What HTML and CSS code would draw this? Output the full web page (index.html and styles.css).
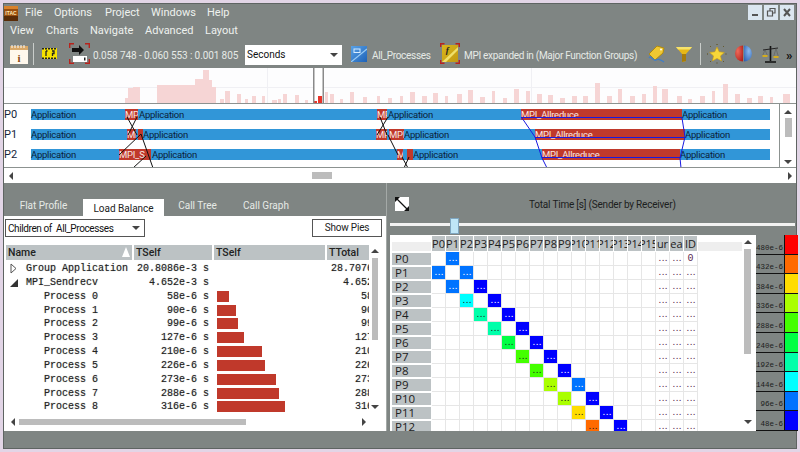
FILE: index.html
```html
<!DOCTYPE html>
<html lang="en">
<head>
    <meta charset="UTF-8">
    <meta name="viewport" content="width=device-width, initial-scale=1.0">
    <title>Intel Trace Analyzer</title>
    <link rel="stylesheet" href="styles.css">
</head>
<body>
    <div class="window">
        <!-- Menus -->
        <div class="menubar menubar-top">
            <svg class="logo" width="14" height="15" viewBox="0 0 14 15">
                <rect width="14" height="15" fill="#9a4f10"/>
                <rect y="10" width="14" height="5" fill="#5a2c08"/>
                <rect width="14" height="3" fill="#d9822b"/>
                <text x="7" y="9" class="logo-text" text-anchor="middle">ITAC</text>
            </svg>
            <span class="menu-file">File</span>
            <span class="menu-options">Options</span>
            <span class="menu-project">Project</span>
            <span class="menu-windows">Windows</span>
            <span class="menu-help">Help</span>
            <div class="win-buttons">
                <div class="win-btn"><svg width="14" height="15" viewBox="0 0 14 15"><rect x="4" y="9" width="6" height="2" fill="#555"/></svg></div>
                <div class="win-btn"><svg width="14" height="15" viewBox="0 0 14 15"><path d="M6 5.5V3.5H11V8H9M3.5 6H8.5V11H3.5Z" fill="none" stroke="#555" stroke-width="1.2"/></svg></div>
                <div class="win-btn"><svg width="14" height="15" viewBox="0 0 14 15"><path d="M4 4L10 11M10 4L4 11" stroke="#555" stroke-width="2"/></svg></div>
            </div>
        </div>
        <div class="menubar menubar-second">
            <span class="menu-view">View</span>
            <span class="menu-charts">Charts</span>
            <span class="menu-navigate">Navigate</span>
            <span class="menu-advanced">Advanced</span>
            <span class="menu-layout">Layout</span>
        </div>

        <!-- Toolbar -->
        <div class="toolbar">
            <svg class="tool-info" width="18" height="20" viewBox="0 0 18 20">
                <rect y="2" width="18" height="18" fill="#fff8ec"/>
                <rect y="2" width="18" height="4" fill="#d8a868"/>
                <path d="M2 1v3M5 1v3M8 1v3M11 1v3M14 1v3" stroke="#fff" stroke-width="1"/>
                <text x="9" y="18" class="icon-i" text-anchor="middle">i</text>
            </svg>
            <div class="tool-sep tool-sep-a"></div>
            <svg class="tool-film" width="15" height="11" viewBox="0 0 15 11">
                <rect width="15" height="11" fill="#f6e200"/>
                <path d="M0 .7H15M0 10.3H15" stroke="#222" stroke-width="1.4" stroke-dasharray="2 1"/>
                <path d="M4 3V8M5.5 3H4M10 3H12V5.5H10.5V8" stroke="#222" fill="none" stroke-width="1.3"/>
            </svg>
            <svg class="tool-select" width="21" height="21" viewBox="0 0 21 21">
                <path d="M.7 5V.7H5M16 .7H20.3V5M.7 16V20.3H5M16 20.3H20.3V16" fill="none" stroke="#b8231c" stroke-width="1.4"/>
                <rect x="4" y="13" width="14" height="6" fill="#fff"/>
                <rect x="15" y="14.5" width="1.5" height="3" fill="#222"/>
                <path d="M3 5H10V2L15 7L10 12V9H3Z" fill="#111"/>
            </svg>
            <span class="tool-time">0.058 748 - 0.060 553 : 0.001 805</span>
            <div class="combo combo-units"><span>Seconds</span><i class="arr-down"></i></div>
            <svg class="tool-blue" width="16" height="16" viewBox="0 0 16 16">
                <defs><linearGradient id="blueFill" x1="0" y1="0" x2="1" y2="1"><stop offset="0" stop-color="#5aa2e6"/><stop offset="1" stop-color="#1d62b8"/></linearGradient></defs>
                <rect width="16" height="16" fill="url(#blueFill)"/>
                <rect x="3" y="3" width="6" height="3.5" fill="none" stroke="#d7ecff"/>
                <path d="M0 16L16 3" stroke="#9accf5" stroke-width="1.2"/>
            </svg>
            <span class="tool-group">All_Processes</span>
            <svg class="tool-yellow" width="20" height="21" viewBox="0 0 20 21">
                <defs><linearGradient id="yellowFill" x1="0" y1="0" x2="1" y2="1"><stop offset="0" stop-color="#d8b61c"/><stop offset="1" stop-color="#c29a12"/></linearGradient></defs>
                <path d="M.7 4V.7H4.5M15.5 .7H19.3V4M.7 17V20.3H4.5M15.5 20.3H19.3V17" fill="none" stroke="#b8231c" stroke-width="1.4"/>
                <rect x="2" y="2" width="16" height="17" fill="url(#yellowFill)"/>
                <path d="M2 19L18 4V7L6 19Z" fill="#efe06a"/>
                <text x="7" y="10" class="icon-f" text-anchor="middle">f</text>
            </svg>
            <span class="tool-expanded">MPI expanded in (Major Function Groups)</span>
            <svg class="tool-tag" width="17" height="18" viewBox="0 0 17 18">
                <path d="M1 9L9 1L16 3L15 8L7 15Z" fill="#f0c832" stroke="#b08a10"/>
                <circle cx="13" cy="4.5" r="1" fill="#fff"/>
                <path d="M1 13C3 9 5 17 8 15S13 15 16 17" fill="none" stroke="#3f7ec8" stroke-width="1.3"/>
            </svg>
            <svg class="tool-funnel" width="16" height="16" viewBox="0 0 16 16">
                <path d="M0 1H16L10 8V15L6 16V8Z" fill="#e6b818"/>
                <path d="M0 1H16L14 3.5H2Z" fill="#f6e26a"/>
                <path d="M6 8H10V15L6 16Z" fill="#a67c0c"/>
            </svg>
            <div class="tool-sep tool-sep-b"></div>
            <svg class="tool-star" width="20" height="20" viewBox="0 0 20 20">
                <path d="M10 3L12.2 7.8L17.4 8.4L13.5 11.9L14.6 17L10 14.4L5.4 17L6.5 11.9L2.6 8.4L7.8 7.8Z" fill="#f7d63a" stroke="#c79a10" stroke-width=".6"/>
                <path d="M10 0V1.5M3 2L4 3M17 2L16 3M0 10H1.5M18.5 10H20M3 18L4 17M17 18L16 17M10 18.5V20" stroke="#5b4a10" stroke-width="1" stroke-dasharray="1 .6"/>
            </svg>
            <svg class="tool-globe" width="17" height="17" viewBox="0 0 17 17">
                <defs>
                    <radialGradient id="redBall" cx=".35" cy=".35" r=".8"><stop offset="0" stop-color="#f06a5a"/><stop offset="1" stop-color="#b0201a"/></radialGradient>
                    <radialGradient id="blueBall" cx=".6" cy=".35" r=".8"><stop offset="0" stop-color="#8ab8ee"/><stop offset="1" stop-color="#2e62b0"/></radialGradient>
                </defs>
                <path d="M8 0.5A8 8 0 0 0 8 16.500Z" fill="url(#redBall)"/>
                <path d="M9 0.5A8 8 0 0 1 9 16.500Z" fill="url(#blueBall)"/>
            </svg>
            <svg class="tool-scale" width="17" height="18" viewBox="0 0 17 18">
                <path d="M8.500 1V16M3 17H14" stroke="#111" stroke-width="1.600"/>
                <path d="M1 5L16 3" stroke="#222" stroke-width="1"/>
                <path d="M3 5L.8 10M3 5L5.200 10M14 3.500L11.800 11M14 3.500L16.200 11" stroke="#555" stroke-width=".5"/>
                <rect x=".5" y="10" width="5" height="2" fill="#d4ac1e"/>
                <rect x="11.500" y="11" width="5" height="2" fill="#d4ac1e"/>
            </svg>
            <span class="tool-more">»</span>
        </div>

        <!-- Event timeline -->
        <div class="timeline">
            <svg id="histogram" class="histogram" width="792" height="35" viewBox="4 68 792 35"></svg>
            <div class="trace">
                <div class="trace-canvas" id="trace-canvas">
                    <svg class="trace-lines" width="776" height="64" viewBox="4 104 776 64">
                        <g stroke="#111" stroke-width="1" fill="none">
                            <path d="M127 117L137 135M137 117L128 135"/>
                            <path d="M141 134L119 155M133 168L146 156M141 134L153 168"/>
                            <path d="M380 117L387 135M388 117L377 135M388 135L398 155"/>
                            <path d="M402 157L408 168M409 157L404 168"/>
                        </g>
                        <g stroke="#1a1ae0" stroke-width="1" fill="none">
                            <path d="M521 117.500H682M535 137.500H685M542 157.500H680"/>
                            <path d="M522 118L535 137L542 158L547 168"/>
                            <path d="M682 118L685 137L680 158L681 168"/>
                        </g>
                    </svg>
                </div>
                <div class="vscroll trace-vscroll">
                    <i class="arr-up"></i>
                    <div class="thumb trace-thumb"></div>
                    <i class="arr-down"></i>
                </div>
            </div>
            <div class="hscroll timeline-hscroll">
                <i class="arr-left"></i>
                <div class="thumb timeline-thumb"></div>
                <i class="arr-right"></i>
            </div>
        </div>

        <div class="panels">
            <!-- Function profile -->
            <div class="left">
                <div class="tabs">
                    <div class="tab tab-flat">Flat Profile</div>
                    <div class="tab tab-load active">Load Balance</div>
                    <div class="tab tab-tree">Call Tree</div>
                    <div class="tab tab-graph">Call Graph</div>
                </div>
                <div class="left-body">
                    <div class="controls">
                        <div class="combo combo-children"><span>Children of  All_Processes</span><i class="arr-down"></i></div>
                        <div class="button">Show Pies</div>
                    </div>
                    <div class="table-wrap">
                        <div class="table">
                            <div class="table-head">
                                <div class="head-name">Name<i class="sort-arrow"></i></div>
                                <div>TSelf</div>
                                <div>TSelf</div>
                                <div>TTotal</div>
                            </div>
                            <div class="row">
                                <div class="name level-0"><svg class="tree-open" width="7" height="11" viewBox="0 0 7 11"><path d="M1 1L6 5.500L1 10Z" fill="#fff" stroke="#555"/></svg>Group Application</div>
                                <div class="num">20.8086e-3 s</div>
                                <div></div>
                                <div class="total"><span>28.7076e-3 s</span></div>
                            </div>
                            <div class="row">
                                <div class="name level-0"><i class="tree-closed"></i>MPI_Sendrecv</div>
                                <div class="num">4.652e-3 s</div>
                                <div></div>
                                <div class="total"><span>4.652e-3 s</span></div>
                            </div>
                            <div id="process-rows"></div>
                        </div>
                        <div class="vscroll table-vscroll">
                            <i class="arr-up"></i>
                            <div class="thumb table-thumb"></div>
                            <i class="arr-down"></i>
                        </div>
                    </div>
                    <div class="hscroll table-hscroll">
                        <i class="arr-left"></i>
                        <div class="thumb table-hthumb"></div>
                        <i class="arr-right"></i>
                    </div>
                </div>
            </div>

            <!-- Message profile -->
            <div class="right">
                <div class="matrix-title">
                    <svg class="expand-icon" width="14" height="14" viewBox="0 0 14 14">
                        <rect width="14" height="14" fill="#fff"/>
                        <path d="M1 1L13 13" stroke="#111" stroke-width="1.300"/>
                        <path d="M0 0H5L0 5ZM14 14H9L14 9Z" fill="#111"/>
                    </svg>
                    <span>Total Time [s] (Sender by Receiver)</span>
                </div>
                <div class="slider"><div class="slider-track"></div><div class="slider-handle"></div></div>
                <div class="matrix-row">
                    <div class="matrix">
                        <div class="matrix-grid" id="matrix-grid"></div>
                        <div class="vscroll matrix-vscroll">
                            <i class="arr-up"></i>
                            <div class="thumb matrix-thumb"></div>
                            <i class="arr-down"></i>
                        </div>
                    </div>
                    <div class="legend" id="legend"></div>
                </div>
            </div>
        </div>
    </div>
    <script src="app.js"></script>
</body>
</html>
```

FILE: styles.css
```css
/* General Reset */
body {
    font-family: Roboto, "Noto Sans", sans-serif;
    margin: 0;
    background-color: #e2d5e6;
    color: #222;
    overflow: hidden;
}

i {
    display: block;
}

.window {
    margin: 3px;
    width: 792px;
    height: 444px;
    border: 1px solid #5e6462;
    background: #7f8583;
    display: flex;
    flex-direction: column;
}

/* Menus */
.menubar {
    display: flex;
    align-items: center;
    color: #eef1ee;
    font-size: 11px;
    flex: none;
}

.menubar-top {
    height: 17px;
}

.menubar-second {
    height: 18px;
}

.logo {
    flex: none;
    margin-top: 1px;
}

.logo-text {
    font: bold 5px "Liberation Sans", sans-serif;
    fill: #ffe9b8;
}

.icon-i {
    font: bold 11px "Liberation Serif", serif;
    fill: #8a4a14;
}

.icon-f {
    font: italic bold 9px "Liberation Serif", serif;
    fill: #222;
}

.menu-file { margin-left: 7px; width: 29px; }
.menu-options { width: 51px; }
.menu-project { width: 46px; }
.menu-windows { width: 56px; }

.menu-view { margin-left: 6px; width: 36px; }
.menu-charts { width: 44px; }
.menu-navigate { width: 55px; }
.menu-advanced { width: 60px; }

.win-buttons {
    margin-left: auto;
    margin-right: 2px;
    display: flex;
    gap: 2px;
}

.win-btn {
    width: 14px;
    height: 15px;
    background: #dbe6f0;
}

/* Toolbar */
.toolbar {
    height: 29px;
    flex: none;
    display: flex;
    align-items: center;
    padding-left: 6px;
    color: #e6eae6;
    font-size: 10px;
    letter-spacing: -0.3px;
    white-space: nowrap;
}

.toolbar svg {
    flex: none;
}

.toolbar span {
    margin-top: 3px;
}

.tool-sep {
    width: 1px;
    height: 22px;
    background: #c9cdca;
}

.tool-sep-a { margin-left: 5px; }
.tool-film { margin-left: 8px; }
.tool-select { margin-left: 12px; }
.tool-time { margin-left: 3px; width: 145px; letter-spacing: -0.1px; }
.combo-units { margin: 2px 0 0 7px; width: 97px; }
.tool-blue { margin-left: 9px; }
.tool-group { margin-left: 5px; width: 57px; }
.tool-yellow { margin-left: 11px; }
.tool-expanded { margin-left: 4px; width: 173px; }
.tool-tag { margin-left: 11px; }
.tool-funnel { margin-left: 11px; }
.tool-sep-b { margin-left: 8px; }
.tool-star { margin-left: 6px; }
.tool-globe { margin-left: 8px; }
.tool-scale { margin-left: 10px; }
.tool-more { margin-left: 7px; color: #111; font-weight: bold; font-size: 13px; }

.toolbar .combo span {
    margin-top: 0;
}

.combo {
    height: 20px;
    background: #fff;
    color: #111;
    display: flex;
    align-items: center;
    justify-content: space-between;
    padding: 0 4px 0 2px;
    box-sizing: border-box;
    font-size: 10px;
    letter-spacing: 0;
    white-space: pre;
}

/* Scroll arrows */
.arr-up, .arr-down {
    width: 0;
    height: 0;
    border-left: 4px solid transparent;
    border-right: 4px solid transparent;
}

.arr-up { border-bottom: 4px solid #444; }
.arr-down { border-top: 4px solid #444; }

.arr-left, .arr-right {
    width: 0;
    height: 0;
    border-top: 4px solid transparent;
    border-bottom: 4px solid transparent;
}

.arr-left { border-right: 4px solid #444; }
.arr-right { border-left: 4px solid #444; }

.thumb {
    background: #bcbcbc;
}

.vscroll {
    display: flex;
    flex-direction: column;
    align-items: center;
    flex: none;
}

.hscroll {
    display: flex;
    align-items: center;
    flex: none;
}

/* Event timeline */
.timeline {
    flex: none;
    background: #fff;
}

.histogram {
    display: block;
    background: #fdfdfe;
    border-bottom: 1px solid #8c9290;
}

.trace {
    display: flex;
    height: 64px;
    border-bottom: 1px solid #8c9290;
    box-sizing: border-box;
}

.trace-canvas {
    position: relative;
    width: 776px;
    border-right: 1px solid #8c9290;
    overflow: hidden;
}

.trace-lines {
    position: absolute;
    left: 0;
    top: 0;
}

.trace-label {
    position: absolute;
    left: 0;
    font-size: 11px;
    line-height: 12px;
    color: #14263a;
}

.trace-bar {
    position: absolute;
    height: 11px;
    line-height: 12px;
    font-size: 9.500px;
    letter-spacing: -0.25px;
    white-space: nowrap;
    color: #0b2238;
    background: #3196d8;
}

.trace-bar.mpi {
    background: #c0392b;
    color: #f6e6e2;
    overflow: hidden;
}

.trace-bar.plain {
    background: none;
}

.trace-vscroll {
    width: 16px;
    padding-top: 6px;
    box-sizing: border-box;
}

.trace-thumb {
    width: 7px;
    height: 19px;
    margin: 4px 0 23px;
}

.timeline-hscroll {
    height: 15px;
    padding: 0 4px 0 5px;
}

.timeline-thumb {
    width: 20px;
    height: 7px;
    margin-left: 299px;
}

.timeline-hscroll .arr-right {
    margin-left: auto;
}

/* Bottom panels */
.panels {
    flex: 1;
    display: flex;
    min-height: 0;
    padding-bottom: 17px;
}

.left {
    width: 382px;
    display: flex;
    flex-direction: column;
    flex: none;
}

.tabs {
    height: 33px;
    display: flex;
    align-items: flex-end;
    flex: none;
    color: #e6eae6;
    font-size: 10px;
}

.tab {
    height: 17px;
    line-height: 14px;
    text-align: center;
}

.tab-flat { width: 79px; }
.tab-load { width: 81px; }
.tab-tree { width: 67px; }
.tab-graph { width: 70px; }

.tab.active {
    background: #fff;
    color: #222;
    line-height: 19px;
}

.left-body {
    flex: 1;
    background: #fff;
    min-height: 0;
    padding: 3px 4px 0 1px;
    display: flex;
    flex-direction: column;
}

.controls {
    display: flex;
    justify-content: space-between;
    height: 18px;
    flex: none;
}

.combo-children {
    width: 140px;
    height: 18px;
    border: 1px solid #555;
    letter-spacing: -0.4px;
}

.button {
    width: 70px;
    border: 1px solid #555;
    box-sizing: border-box;
    text-align: center;
    font-size: 10px;
    letter-spacing: -0.2px;
    line-height: 16px;
}

.table-wrap {
    display: flex;
    height: 170px;
    margin: 8px 0 0 1px;
    flex: none;
}

.table {
    width: 364px;
    flex: none;
    overflow: hidden;
}

.table-head, .row {
    display: grid;
    grid-template-columns: 126px 78px 111px 42px;
    column-gap: 2px;
}

.table-head {
    height: 15px;
    margin-bottom: 2px;
    font-size: 10.5px;
    line-height: 15px;
    font-weight: 500;
}

.table-head div {
    background: #bcc2c4;
    padding-left: 2px;
    position: relative;
}

.sort-arrow {
    position: absolute;
    right: 2px;
    top: 2px;
    width: 0;
    height: 0;
    border-left: 4px solid transparent;
    border-right: 4px solid transparent;
    border-bottom: 10px solid #fff;
}

.row {
    height: 13.85px;
    font: 10px/13.85px "Liberation Mono", monospace;
    color: #222;
    text-shadow: 0 0 1px #999;
    white-space: pre;
}

.name {
    position: relative;
}

.level-0 { padding-left: 20px; }
.level-1 { padding-left: 38px; }

.tree-open {
    position: absolute;
    left: 4px;
    top: 1px;
}

.tree-closed {
    position: absolute;
    left: 4px;
    top: 3px;
    width: 0;
    height: 0;
    border-left: 8px solid transparent;
    border-bottom: 8px solid #333;
}

.num {
    text-align: right;
    padding-right: 3px;
}

.bar {
    height: 11px;
    margin: 1px 0 0 3px;
    background: #c0392b;
}

.total {
    overflow: hidden;
    display: flex;
    justify-content: flex-end;
}

.total span {
    flex: none;
    margin-right: -34px;
}

.table-vscroll {
    width: 10px;
    padding-top: 4px;
    box-sizing: border-box;
}

.table-thumb {
    width: 6px;
    height: 82px;
    margin: 5px 0 65px;
}

.table-hscroll {
    height: 14px;
    padding-left: 6px;
}

.table-hthumb {
    width: 227px;
    height: 6px;
    margin-left: 4px;
    margin-right: 116px;
}

/* Matrix */
.right {
    flex: 1;
    min-width: 0;
    padding-left: 3px;
    display: flex;
    flex-direction: column;
    border-left: 1px solid #a4a9a7;
    box-sizing: border-box;
}

.matrix-title {
    height: 35px;
    flex: none;
    display: flex;
    align-items: center;
    padding-top: 7px;
    box-sizing: border-box;
    color: #1c2020;
    font-size: 10px;
    letter-spacing: -0.2px;
    white-space: nowrap;
}

.expand-icon {
    margin-left: 5px;
}

.matrix-title span {
    margin-left: 120px;
}

.slider {
    height: 17px;
    flex: none;
    position: relative;
}

.slider-track {
    height: 3px;
    margin: 5px 0 0 0;
    background: #f2f2f2;
    width: 405px;
}

.slider-handle {
    position: absolute;
    left: 60px;
    top: 0;
    width: 7px;
    height: 14px;
    background: #bfe6f7;
    border: 1px solid #7fa6c0;
}

.matrix-row {
    flex: 1;
    display: flex;
    min-height: 0;
}

.matrix {
    width: 366px;
    flex: none;
    background: #fff;
    overflow: hidden;
    position: relative;
}

.matrix-grid {
    display: grid;
    grid-template-columns: 39px repeat(19, 13px) 44px;
    grid-template-rows: 15px repeat(13, 13px);
    gap: 1px;
    padding: 1px 0 0 2px;
    font-family: "Open Sans", sans-serif;
    font-size: 11px;
}

.corner {
    background: #eeeeee;
    margin-top: 6px;
}

.col-head {
    background: #bcc2c4;
    color: #1c2020;
    display: flex;
    justify-content: center;
    overflow: hidden;
    line-height: 15px;
    white-space: nowrap;
}

.head-rest {
    background: #eeeeee;
    margin-top: 6px;
}

.row-head {
    grid-column: 1;
    background: #bcc2c4;
    margin-top: 1px;
    padding-left: 3px;
    line-height: 12px;
    color: #1c2020;
    font-size: 11.5px;
}

.cell {
    box-shadow: 1px 1px 0 #e6e6e6, 0 1px 0 #e6e6e6, 1px 0 0 #e6e6e6;
    font: bold 7px/13px "Liberation Mono", monospace;
    text-align: center;
    color: #5a2a50;
    overflow: hidden;
    letter-spacing: -1px;
    padding-top: 1px;
    height: 12px;
}

.cell.dark { color: #222; }
.cell.light { color: #fff; }

.cell.value {
    font: 10px/13px "Liberation Mono", monospace;
    letter-spacing: 0;
    padding-top: 0;
    height: 13px;
}

.matrix-vscroll {
    position: absolute;
    left: 353px;
    top: 0;
    bottom: 0;
    width: 9px;
    padding-top: 5px;
}

.matrix-thumb {
    width: 7px;
    height: 105px;
    margin: 5px 0 66px;
}

/* Colour legend */
.legend {
    flex: 1;
    display: flex;
    flex-direction: column;
}

.legend-row {
    flex: 1;
    display: flex;
    border-bottom: 1px solid #111;
}

.legend-label {
    flex: 1;
    align-self: flex-end;
    font: 7.500px/11px "Liberation Mono", monospace;
    text-align: right;
    color: #1c2020;
    padding-right: 1px;
    white-space: nowrap;
}

.legend-swatch {
    width: 13px;
    flex: none;
    border-left: 1px solid #111;
}
```

FILE: app.js
```js
// Histogram bars: [x, width, top]
const histBars = [
    [125,3,98],[128,5,88],[133,7,87],[157,38,85],[195,8,79],[203,6,70],[209,3,80],[212,4,87],
    [220,4,99],[225,5,91],[237,4,94],[245,3,99],[252,4,96],[262,3,96],[272,5,100],[278,3,99],
    [283,4,94],[295,4,95],[305,3,100],[325,3,92],[330,4,94],[340,3,99],[350,4,92],[363,4,97],
    [377,3,96],[388,4,98],[400,3,96],[410,5,92],[422,5,96],[433,5,93],[445,3,96],[457,5,94],
    [468,5,90],[480,5,97],[492,3,91],[503,4,98],[514,5,89],[526,4,91],[537,5,94],[548,5,95],
    [560,5,98],[572,5,96],[583,5,96],[595,5,83],[607,5,96],[618,4,89],[630,5,96],[642,4,94],
    [653,4,86],[662,6,89],[677,5,96],[688,4,99],[700,5,96],[712,3,91],[723,5,84],[735,5,94],
    [747,5,98],[758,5,96],[770,3,97],[783,7,94]
];

let hist = '<path d="M267.500 68V103M531.500 68V103M4 87.500H796" stroke="#f0f0f4" fill="none"/>';
histBars.forEach(function(b) {
    hist += `<rect x="${b[0]}" y="${b[2]}" width="${b[1]}" height="${103 - b[2]}" fill="#f6d5d5"/>`;
});
hist += '<rect x="313" y="68" width="11" height="35" fill="#fff"/>';
hist += '<rect x="314" y="101" width="3" height="2" fill="#e8352b"/><rect x="318" y="96" width="4" height="7" fill="#e8352b"/>';
hist += '<rect x="313" y="68" width="1.500" height="35" fill="#8a8a8a"/><rect x="322.500" y="68" width="1.500" height="35" fill="#8a8a8a"/>';
document.getElementById('histogram').innerHTML = hist;

// Trace rows: label top, bar top, then segments [x, width, text, kind]
const traceRows = [
    { name: 'P0', y: 109, segs: [
        [125,13,'MPI','mpi'],[139,0,'Application','plain'],[377,10,'MPI','mpi'],[388,0,'Application','plain'],
        [521,161,'MPI_Allreduce','mpi'],[682,0,'Application','plain']
    ] },
    { name: 'P1', y: 129, segs: [
        [127,9,'MPI','mpi'],[138,5,'','mpi'],[143,0,'Application','plain'],[376,11,'MP','mpi'],[389,15,'MPI','mpi'],
        [404,0,'Application','plain'],[535,150,'MPI_Allreduce','mpi'],[685,0,'Application','plain']
    ] },
    { name: 'P2', y: 149, segs: [
        [119,28,'MPI_S','mpi'],[147,4,'','mpi'],[152,0,'Application','plain'],[397,6,'M','mpi'],[407,6,'','mpi'],
        [413,0,'Application','plain'],[542,138,'MPI_Allreduce','mpi'],[680,0,'Application','plain']
    ] }
];

const canvas = document.getElementById('trace-canvas');
const lines = canvas.querySelector('.trace-lines');

function addTraceBar(x, y, w, text, kind) {
    const el = document.createElement('div');
    el.className = 'trace-bar ' + (kind || '');
    el.style.left = (x - 4) + 'px';
    el.style.top = (y - 104) + 'px';
    if (w) el.style.width = w + 'px';
    el.textContent = text;
    canvas.insertBefore(el, lines);
}

traceRows.forEach(function(row) {
    const label = document.createElement('div');
    label.className = 'trace-label';
    label.style.top = (row.y - 104) + 'px';
    label.textContent = row.name;
    canvas.appendChild(label);

    addTraceBar(31, row.y, 739, '', '');
    addTraceBar(31, row.y, 0, 'Application', 'plain');
    row.segs.forEach(function(s) {
        addTraceBar(s[0], row.y, s[1], s[2], s[3]);
    });
});

// Process rows in the load balance table
const processes = [58, 90, 99, 127, 210, 226, 273, 288, 316];
const rowsEl = document.getElementById('process-rows');

processes.forEach(function(value, i) {
    const width = Math.round(value * 0.2145);
    const row = document.createElement('div');
    row.className = 'row';
    row.innerHTML = `<div class="name level-1">Process ${i}</div>` +
        `<div class="num">${value}e-6 s</div>` +
        `<div><div class="bar" style="width:${width}px"></div></div>` +
        `<div class="total"><span>${value}e-6 s</span></div>`;
    rowsEl.appendChild(row);
});

// Message matrix
const BLUE = '#0000ff';
const SKY = '#0073ff';
const lower = [SKY, SKY, '#00ffff', '#00ffaa', '#00ffaa', '#00ff44', '#44ff00', '#44ff00', '#aaff00', '#aaff00', '#ffdd00', '#ff6a00'];
const upper = [SKY, SKY, BLUE, BLUE, BLUE, BLUE, BLUE, BLUE, BLUE, SKY, BLUE, BLUE, BLUE];
const heads = [];
for (let i = 0; i < 16; i++) heads.push('P' + i);
heads.push('ur', 'ea', 'ID');

let html = '<div class="corner"></div>';
heads.forEach(function(h) {
    html += `<div class="col-head"><span>${h}</span></div>`;
});
html += '<div class="head-rest"></div>';

for (let r = 0; r < 13; r++) {
    html += `<div class="row-head">P${r}</div>`;
    for (let c = 0; c < 19; c++) {
        let color = null;
        let text = '';
        if (c === r + 1) color = upper[r];
        if (c === r - 1) color = lower[r - 1];
        if (color || c >= 16) text = '...';
        if (r === 0 && c === 18) {
            html += '<div class="cell value">0</div>';
            continue;
        }
        const isLight = color === BLUE || color === SKY;
        const cls = color ? (isLight ? 'cell light' : 'cell dark') : 'cell';
        const bg = color ? ` style="background:${color}"` : '';
        html += `<div class="${cls}"${bg}>${text}</div>`;
    }
}
document.getElementById('matrix-grid').innerHTML = html;

// Colour legend
const legend = [
    ['480e-6', '#ff0000'], ['432e-6', '#ff6a00'], ['384e-6', '#ffdd00'], ['336e-6', '#aaff00'],
    ['288e-6', '#44ff00'], ['240e-6', '#00ff44'], ['192e-6', '#00ffaa'], ['144e-6', '#00ffff'],
    ['96e-6', '#0073ff'], ['48e-6', '#0000ff']
];
document.getElementById('legend').innerHTML = legend.map(function(l) {
    return `<div class="legend-row"><div class="legend-label">${l[0]}</div>` +
        `<div class="legend-swatch" style="background:${l[1]}"></div></div>`;
}).join('');
```
